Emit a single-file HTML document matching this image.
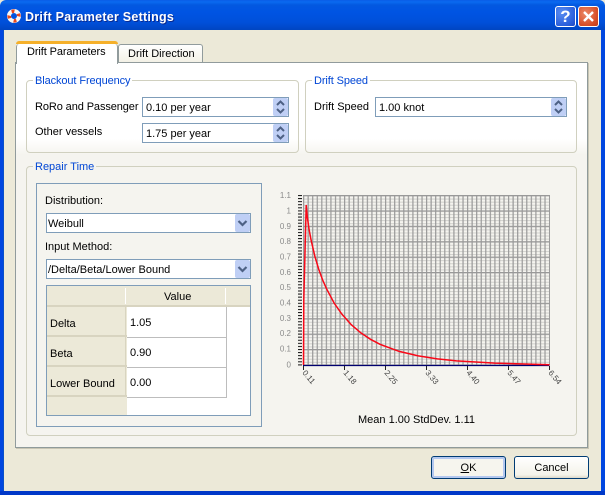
<!DOCTYPE html>
<html><head><meta charset="utf-8">
<style>
*{box-sizing:border-box}
html,body{margin:0;padding:0;width:605px;height:495px;overflow:hidden;background:#ece9d8}
body{position:relative;font:11px "Liberation Sans",sans-serif;color:#000}
.a,.t{position:absolute}
.t{white-space:nowrap;line-height:16px}
.g{position:absolute;border:1px solid #d0d0bf;border-radius:4px}
.l{color:#0046d5;background:#fff;line-height:14px;margin-top:1px;letter-spacing:-.1px}
.f{position:absolute;border:1px solid #7f9db9;background:#fff}
.th{position:absolute;background:#ece9d8}
.sep{position:absolute;background:#d8d4c0}
</style></head><body>
<!-- window frame -->
<div class="a" style="left:0;top:0;width:605px;height:30px;background:linear-gradient(#0a5de6 0,#0a6af0 2px,#0358e0 5px,#0054e3 12px,#0050da 22px,#0048c8 28px,#0046c0 30px);border-radius:6px 6px 0 0"></div>
<div class="a" style="left:0;top:30px;width:3px;height:465px;background:#0046e0"></div>
<div class="a" style="left:3px;top:30px;width:1px;height:461px;background:#0a50c8"></div>
<div class="a" style="right:0;top:30px;width:4px;height:465px;background:#0046e0"></div>
<div class="a" style="left:0;bottom:0;width:605px;height:4px;background:#0038c8"></div>
<!-- lifebuoy icon -->
<svg class="a" style="left:6px;top:8px" width="16" height="16" viewBox="0 0 16 16"><circle cx="8" cy="8" r="5" fill="none" stroke="#f6f6f6" stroke-width="4"/><path d="M3.300 3.300A6.700 6.700 0 0 1 6.500 1.500L7 5.200A3 3 0 0 0 5.300 6.200Z" fill="#e8481c" transform="rotate(20 8 8)"/><path d="M3.300 3.300A6.700 6.700 0 0 1 6.500 1.500L7 5.200A3 3 0 0 0 5.300 6.200Z" fill="#e8481c" transform="rotate(110 8 8)"/><path d="M3.300 3.300A6.700 6.700 0 0 1 6.500 1.500L7 5.200A3 3 0 0 0 5.300 6.200Z" fill="#e8481c" transform="rotate(200 8 8)"/><path d="M3.300 3.300A6.700 6.700 0 0 1 6.500 1.500L7 5.200A3 3 0 0 0 5.300 6.200Z" fill="#e8481c" transform="rotate(290 8 8)"/></svg>
<div class="t" style="left:25px;top:10px;color:#fff;font-weight:bold;font-size:12.5px;line-height:15px;text-shadow:1px 1px 0 #0a2a90;letter-spacing:.25px">Drift Parameter Settings</div>
<!-- caption buttons -->
<div class="a" style="left:555px;top:6px;width:21px;height:21px;border:1px solid #fff;border-radius:3px;background:radial-gradient(circle at 30% 30%,#5a8cf0,#2a5fdc 70%,#2048c0);color:#fff;font:bold 17px/19px 'Liberation Sans',sans-serif;text-align:center">?</div>
<div class="a" style="left:578px;top:6px;width:21px;height:21px;border:1px solid #fff;border-radius:3px;background:radial-gradient(circle at 35% 35%,#ec8a68,#d8502a 65%,#c03a18)"><svg width="19" height="19" style="display:block"><path d="M5 5 14 14M14 5 5 14" stroke="#fff" stroke-width="2.400" fill="none"/></svg></div>

<!-- tabs pane -->
<div class="a" style="left:15px;top:62px;width:573px;height:386px;border:1px solid #919b9c;border-right-color:#8f9a9a;border-bottom-color:#8f9a9a;box-shadow:1px 1px 0 #c8c5b4;background:linear-gradient(#fff 0,#fff 76px,#f5f4ef 92px,#f5f4ef 100%)"></div>
<div class="a" style="left:118px;top:44px;width:85px;height:18px;background:linear-gradient(#fff,#f3f1e6);border:1px solid #919b9c;border-bottom:0;border-radius:3px 3px 0 0"></div>
<div class="t" style="left:128px;top:46px">Drift Direction</div>
<div class="a" style="left:16px;top:44px;width:102px;height:20px;background:#fff;border-left:1px solid #919b9c;border-right:1px solid #919b9c;border-radius:3px 3px 0 0"></div>
<div class="a" style="left:16px;top:41px;width:102px;height:3px;background:#f5b02a;border-radius:3px 3px 0 0"></div>
<div class="t" style="left:27px;top:44px;letter-spacing:-.1px">Drift Parameters</div>

<!-- Blackout group -->
<div class="g" style="left:26px;top:80px;width:273px;height:73px"></div>
<div class="t l" style="left:33px;top:73px;padding:0 2px">Blackout Frequency</div>
<div class="t" style="left:35px;top:99px;letter-spacing:-.1px">RoRo and Passenger</div>
<div class="f" style="left:142px;top:97px;width:147px;height:20px"></div>
<div class="t" style="left:146px;top:100px">0.10 per year</div>
<div class="t" style="left:35px;top:124px">Other vessels</div>
<div class="f" style="left:142px;top:123px;width:147px;height:20px"></div>
<div class="t" style="left:146px;top:126px">1.75 per year</div>
<svg class="a" style="left:273px;top:98px" width="15" height="18"><rect width="15" height="18" rx="2" fill="#bfcff5"/><path d="M4 7 7.500 3.500 11 7M4 11 7.500 14.500 11 11" stroke="#4d6185" stroke-width="2" fill="none"/></svg>
<svg class="a" style="left:273px;top:124px" width="15" height="18"><rect width="15" height="18" rx="2" fill="#bfcff5"/><path d="M4 7 7.500 3.500 11 7M4 11 7.500 14.500 11 11" stroke="#4d6185" stroke-width="2" fill="none"/></svg>

<!-- Drift speed group -->
<div class="g" style="left:305px;top:80px;width:272px;height:73px"></div>
<div class="t l" style="left:312px;top:73px;padding:0 2px">Drift Speed</div>
<div class="t" style="left:314px;top:99px">Drift Speed</div>
<div class="f" style="left:375px;top:97px;width:192px;height:20px"></div>
<div class="t" style="left:379px;top:100px">1.00 knot</div>
<svg class="a" style="left:551px;top:98px" width="15" height="18"><rect width="15" height="18" rx="2" fill="#bfcff5"/><path d="M4 7 7.500 3.500 11 7M4 11 7.500 14.500 11 11" stroke="#4d6185" stroke-width="2" fill="none"/></svg>

<!-- Repair group -->
<div class="g" style="left:26px;top:166px;width:551px;height:270px"></div>
<div class="t" style="left:33px;top:159px;padding:0 2px;color:#0046d5;background:#f5f4ef">Repair Time</div>
<div class="a" style="left:36px;top:183px;width:226px;height:244px;border:1px solid #7f9db9;background:#f5f4ef"></div>
<div class="t" style="left:45px;top:193px">Distribution:</div>
<div class="f" style="left:46px;top:213px;width:205px;height:20px"></div>
<div class="t" style="left:48px;top:216px">Weibull</div>
<svg class="a" style="left:235px;top:214px" width="15" height="18"><rect width="15" height="18" rx="2" fill="#bfcff5"/><path d="M3.500 7 7.500 11 11.500 7" stroke="#4d6185" stroke-width="2.200" fill="none"/></svg>
<div class="t" style="left:45px;top:239px">Input Method:</div>
<div class="f" style="left:46px;top:259px;width:205px;height:20px"></div>
<div class="t" style="left:48px;top:262px">/Delta/Beta/Lower Bound</div>
<svg class="a" style="left:235px;top:260px" width="15" height="18"><rect width="15" height="18" rx="2" fill="#bfcff5"/><path d="M3.500 7 7.500 11 11.500 7" stroke="#4d6185" stroke-width="2.200" fill="none"/></svg>

<!-- table -->
<div class="a" style="left:46px;top:285px;width:205px;height:131px;border:1px solid #7f9db9;background:#fff"></div>
<div class="th" style="left:47px;top:286px;width:203px;height:21px"></div>
<div class="sep" style="left:47px;top:305px;width:203px;height:2px"></div>
<div class="a" style="left:125px;top:288px;width:1px;height:16px;background:#fff"></div>
<div class="a" style="left:225px;top:288px;width:1px;height:16px;background:#fff"></div>
<div class="t" style="left:164px;top:289px">Value</div>
<div class="th" style="left:47px;top:307px;width:80px;height:108px"></div>
<div class="sep" style="left:47px;top:335px;width:80px;height:2px"></div>
<div class="sep" style="left:47px;top:365px;width:80px;height:2px"></div>
<div class="sep" style="left:47px;top:395px;width:80px;height:2px"></div>
<div class="a" style="left:125px;top:307px;width:1px;height:90px;background:#d8d4c0"></div>
<div class="a" style="left:127px;top:337px;width:100px;height:1px;background:#bdbdbd"></div>
<div class="a" style="left:127px;top:367px;width:100px;height:1px;background:#bdbdbd"></div>
<div class="a" style="left:127px;top:397px;width:100px;height:1px;background:#bdbdbd"></div>
<div class="a" style="left:226px;top:307px;width:1px;height:91px;background:#bdbdbd"></div>
<div class="t" style="left:50px;top:316px">Delta</div>
<div class="t" style="left:50px;top:346px">Beta</div>
<div class="t" style="left:50px;top:376px">Lower Bound</div>
<div class="t" style="left:130px;top:315px">1.05</div>
<div class="t" style="left:130px;top:345px">0.90</div>
<div class="t" style="left:130px;top:375px">0.00</div>

<!-- chart -->
<svg class="a" style="left:270px;top:185px" width="300" height="215" viewBox="270 185 300 215">
<defs>
<pattern id="mn" x="303" y="195.500" width="246" height="3.080" patternUnits="userSpaceOnUse"><rect y="0" width="246" height="1" fill="#d0d0cc"/></pattern>
<pattern id="mj" x="303" y="195" width="246" height="15.400" patternUnits="userSpaceOnUse"><rect y="0" width="246" height="1.200" fill="#999"/></pattern>
<pattern id="vl" x="303" y="195" width="4.555" height="170" patternUnits="userSpaceOnUse"><rect x="0" width="1.200" height="170" fill="#999"/></pattern>
<pattern id="tk" x="298" y="195" width="5" height="3.080" patternUnits="userSpaceOnUse"><rect y="0" width="4" height="1" fill="#111"/></pattern>
</defs>
<rect x="303" y="195" width="247" height="170" fill="url(#mn)"/>
<rect x="303" y="195" width="247" height="170" fill="url(#vl)"/>
<rect x="303" y="195" width="247" height="170" fill="url(#mj)"/>
<rect x="298" y="195" width="4" height="171" fill="url(#tk)"/>
<path d="M303 365.500H549.500" stroke="#000070" stroke-width="1.200"/>
<path d="M303.500 366v4M344.500 366v4M385.500 366v4M426.500 366v4M467.500 366v4M508.500 366v4M549.500 366v4" stroke="#222" stroke-width="1"/>
<polyline fill="none" stroke="#f80818" stroke-width="1.500" points="303.500,365 303.800,300 306.200,205 307.300,217 309.200,230.200 311.200,240.600 315,256.800 318.800,269.500 322.600,279.900 326.500,288.700 334.100,303 341.800,314 351.300,324.700 360.900,332.900 370.500,339.300 380,344.300 399.200,351.400 418.300,355.900 437.400,358.900 456.500,360.900 494.800,363.100 549.500,364.700"/>
<g font-family="Liberation Sans,sans-serif" font-size="8" fill="#8a8a8a" text-anchor="end">
<text x="291" y="198">1.1</text><text x="291" y="213.500">1</text><text x="291" y="229">0.9</text><text x="291" y="244">0.8</text><text x="291" y="259.500">0.7</text><text x="291" y="275">0.6</text><text x="291" y="290">0.5</text><text x="291" y="305.500">0.4</text><text x="291" y="321">0.3</text><text x="291" y="336">0.2</text><text x="291" y="351.500">0.1</text><text x="291" y="367.500">0</text>
</g>
<g font-family="Liberation Sans,sans-serif" font-size="8" fill="#444">
<text transform="translate(302,373) rotate(50)">0.11</text>
<text transform="translate(343,373) rotate(50)">1.18</text>
<text transform="translate(384,373) rotate(50)">2.25</text>
<text transform="translate(425,373) rotate(50)">3.33</text>
<text transform="translate(466,373) rotate(50)">4.40</text>
<text transform="translate(507,373) rotate(50)">5.47</text>
<text transform="translate(548,373) rotate(50)">6.54</text>
</g>
</svg>
<div class="t" style="left:358px;top:412px">Mean 1.00 StdDev. 1.11</div>

<!-- buttons -->
<div class="a" style="left:431px;top:456px;width:75px;height:23px;border:1px solid #003c74;border-radius:3px;background:#f6f5ee;box-shadow:inset 0 0 0 2px #b4c8ef;text-align:center;line-height:22px"><span style="text-decoration:underline">O</span>K</div>
<div class="a" style="left:514px;top:456px;width:75px;height:23px;border:1px solid #003c74;border-radius:3px;background:linear-gradient(#fff,#f4f3ea 85%,#dcd8c8);text-align:center;line-height:22px">Cancel</div>
</body></html>
